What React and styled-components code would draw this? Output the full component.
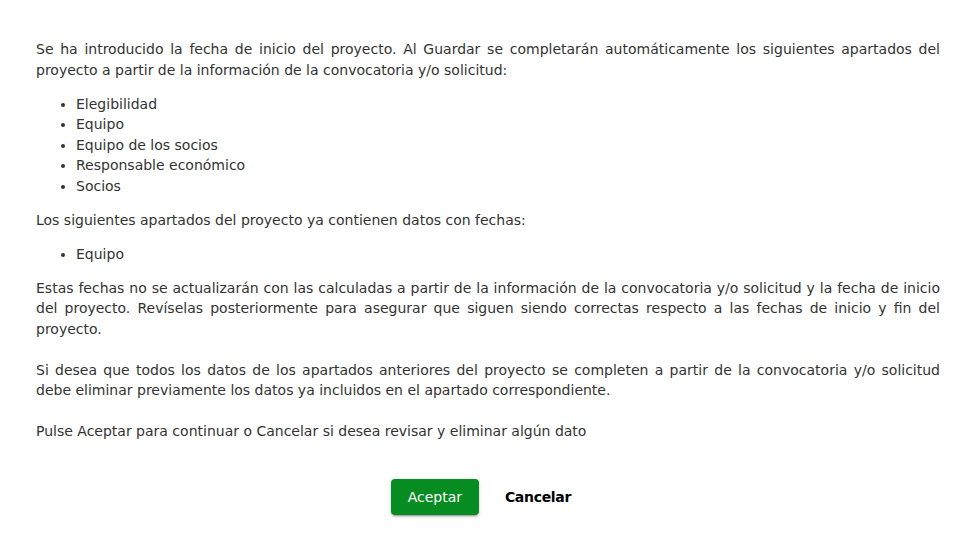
import React from "react";
import styled, { createGlobalStyle } from "styled-components";

const GlobalStyle = createGlobalStyle`
  body {
    margin: 0;
    background: #fff;
    font-family: "DejaVu Sans", "Open Sans", sans-serif;
    color: #333;
  }
`;

const Dialog = styled.div`
  width: 978px;
  height: 533px;
  box-sizing: border-box;
  padding: 39px 38px 0 36px;
  display: flex;
  flex-direction: column;
`;

const Content = styled.div`
  font-size: 14px;
  line-height: 20.5px;
  text-align: justify;

  p {
    margin: 0 0 13.5px;
  }
`;

const List = styled.ul`
  margin: 0 0 13.5px;
  padding-left: 40px;
  text-align: left;
`;

const Actions = styled.div`
  display: flex;
  justify-content: center;
  align-items: center;
  gap: 10px;
  margin-top: 24px;
  padding-left: 2px;
`;

const Button = styled.button`
  font-family: inherit;
  font-size: 14px;
  height: 36px;
  padding: 0 16px;
  border: none;
  border-radius: 4px;
  cursor: pointer;
  background: ${(p) => (p.$primary ? "#078c21" : "transparent")};
  color: ${(p) => (p.$primary ? "#fff" : "#000")};
  font-weight: ${(p) => (p.$primary ? 400 : 600)};
  letter-spacing: ${(p) => (p.$primary ? "0" : "-0.3px")};
  min-width: 88px;
  box-shadow: ${(p) =>
    p.$primary
      ? "0 3px 1px -2px rgba(0,0,0,.2), 0 2px 2px 0 rgba(0,0,0,.14), 0 1px 5px 0 rgba(0,0,0,.12)"
      : "none"};
`;

const App = () => {
  return (
    <>
      <GlobalStyle />
      <Dialog>
        <Content>
          <p>
            Se ha introducido la fecha de inicio del proyecto. Al Guardar se
            completarán automáticamente los siguientes apartados del proyecto a
            partir de la información de la convocatoria y/o solicitud:
          </p>
          <List>
            <li>Elegibilidad</li>
            <li>Equipo</li>
            <li>Equipo de los socios</li>
            <li>Responsable económico</li>
            <li>Socios</li>
          </List>
          <p>Los siguientes apartados del proyecto ya contienen datos con fechas:</p>
          <List>
            <li>Equipo</li>
          </List>
          <p>
            Estas fechas no se actualizarán con las calculadas a partir de la
            información de la convocatoria y/o solicitud y la fecha de inicio
            del proyecto. Revíselas posteriormente para asegurar que siguen
            siendo correctas respecto a las fechas de inicio y fin del proyecto.
            <br />
            <br />
            Si desea que todos los datos de los apartados anteriores del
            proyecto se completen a partir de la convocatoria y/o solicitud debe
            eliminar previamente los datos ya incluidos en el apartado
            correspondiente.
            <br />
            <br />
            Pulse Aceptar para continuar o Cancelar si desea revisar y eliminar
            algún dato
          </p>
        </Content>
        <Actions>
          <Button $primary>Aceptar</Button>
          <Button>Cancelar</Button>
        </Actions>
      </Dialog>
    </>
  );
};

export default App;
